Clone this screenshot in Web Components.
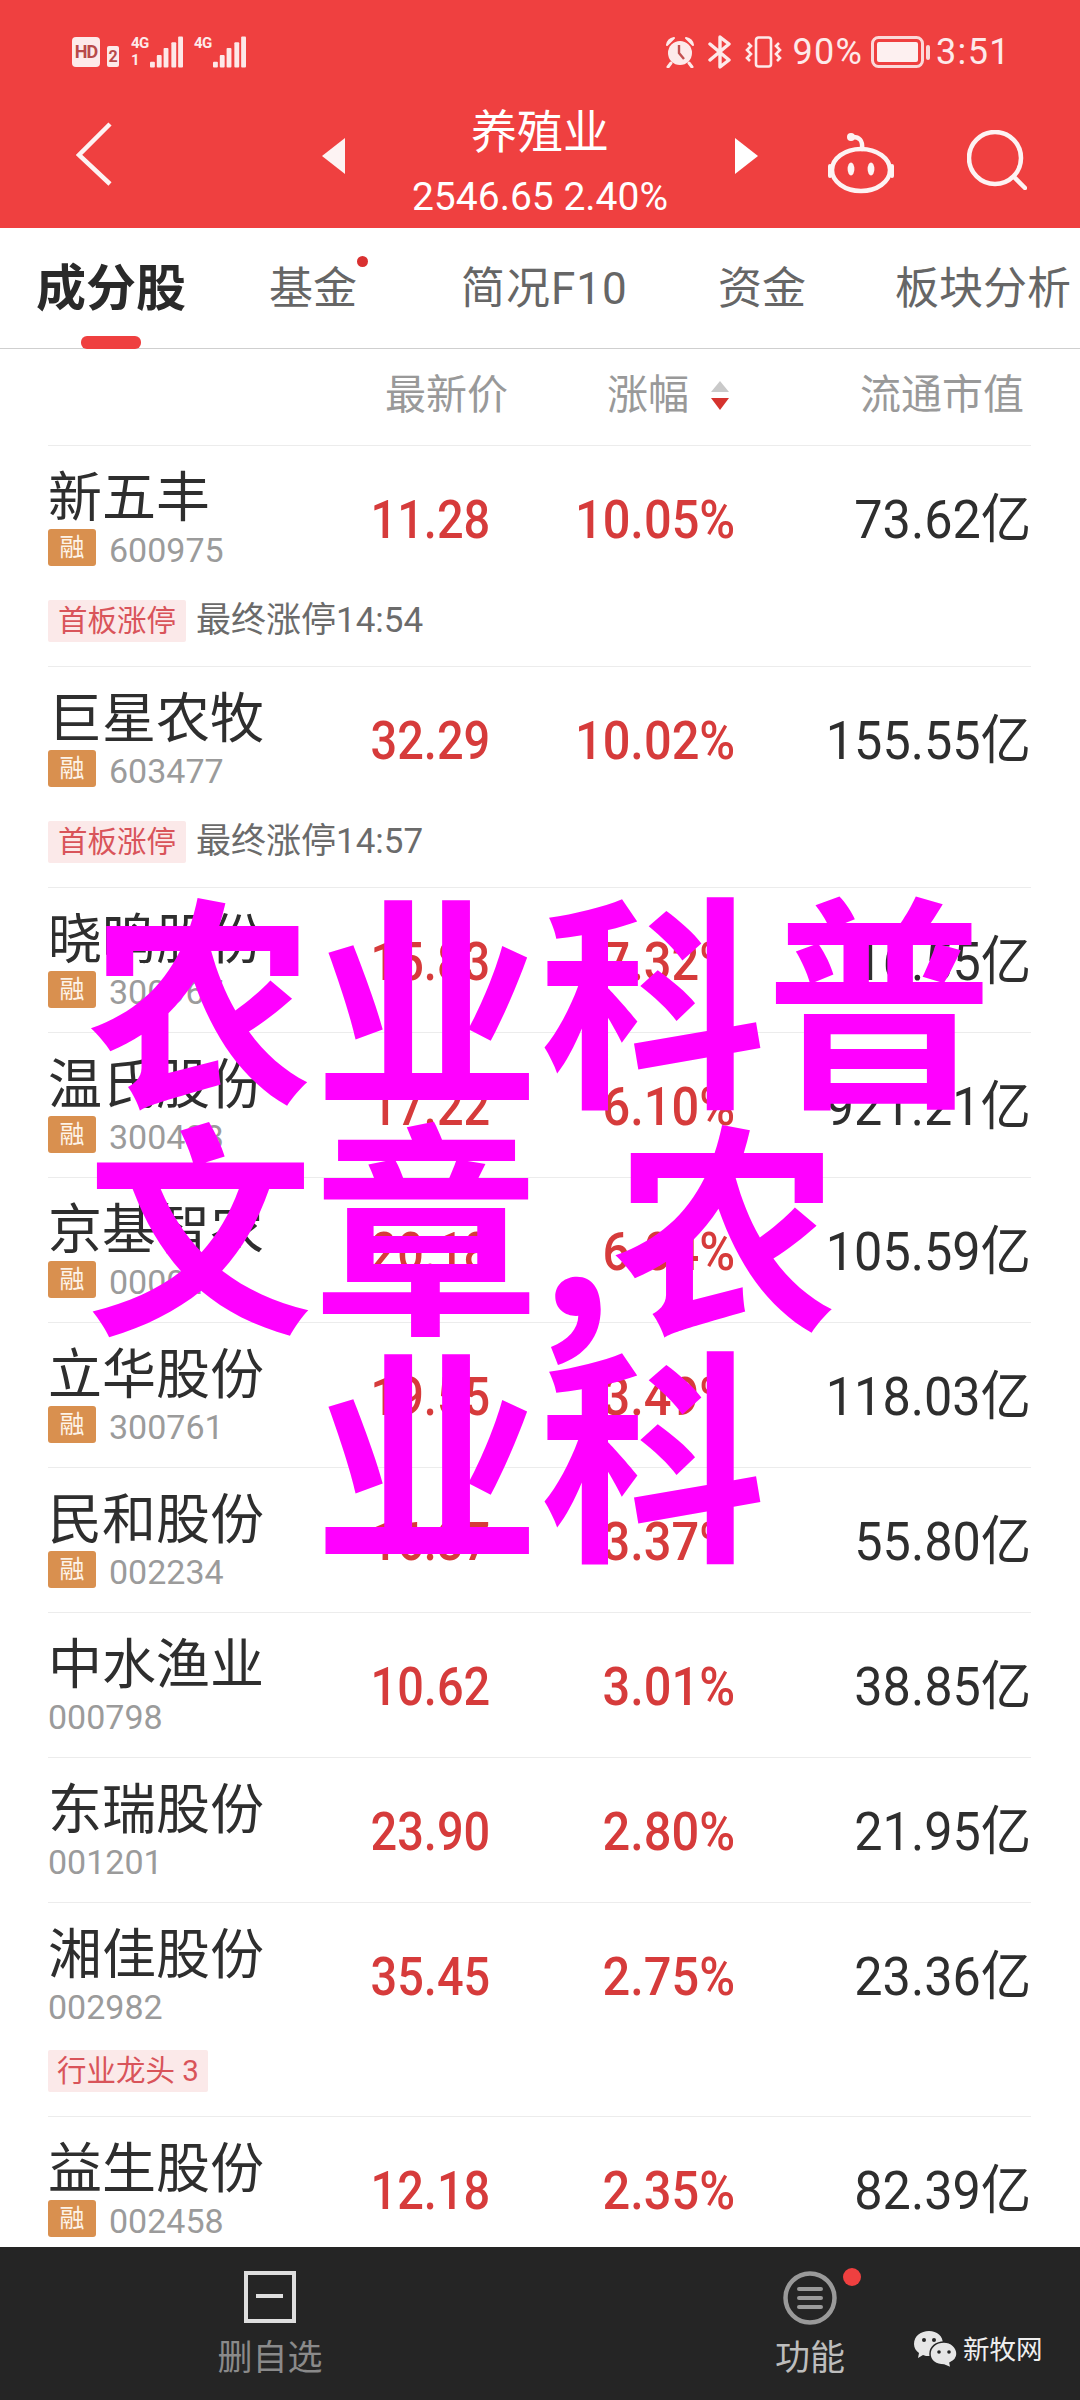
<!DOCTYPE html>
<html lang="zh">
<head>
<meta charset="utf-8">
<title>养殖业</title>
<style>
  html, body { margin: 0; padding: 0; }
  body {
    position: relative;
    width: 1080px;
    height: 2400px;
    overflow: hidden;
    background: #fff;
    font-family: Roboto, "Noto Sans CJK SC", sans-serif;
    display: flex;
    flex-direction: column;
  }
  stock-list { flex: 1; min-height: 0; }
</style>
</head>
<body>
<app-header></app-header>
<tab-bar></tab-bar>
<list-header></list-header>
<stock-list>
  <stock-row name="新五丰" code="600975" price="11.28" pct="10.05%" cap="73.62亿" margin tag="首板涨停" note="最终涨停14:54"></stock-row>
  <stock-row name="巨星农牧" code="603477" price="32.29" pct="10.02%" cap="155.55亿" margin tag="首板涨停" note="最终涨停14:57"></stock-row>
  <stock-row name="晓鸣股份" code="300967" price="15.83" pct="7.32%" cap="16.55亿" margin></stock-row>
  <stock-row name="温氏股份" code="300498" price="17.22" pct="6.10%" cap="921.21亿" margin></stock-row>
  <stock-row name="京基智农" code="000048" price="20.18" pct="6.04%" cap="105.59亿" margin></stock-row>
  <stock-row name="立华股份" code="300761" price="19.55" pct="3.49%" cap="118.03亿" margin></stock-row>
  <stock-row name="民和股份" code="002234" price="16.37" pct="3.37%" cap="55.80亿" margin></stock-row>
  <stock-row name="中水渔业" code="000798" price="10.62" pct="3.01%" cap="38.85亿"></stock-row>
  <stock-row name="东瑞股份" code="001201" price="23.90" pct="2.80%" cap="21.95亿"></stock-row>
  <stock-row name="湘佳股份" code="002982" price="35.45" pct="2.75%" cap="23.36亿" tag="行业龙头 3" tight></stock-row>
  <stock-row name="益生股份" code="002458" price="12.18" pct="2.35%" cap="82.39亿" margin></stock-row>
</stock-list>
<bottom-bar></bottom-bar>
<watermark-text></watermark-text>

<script>
const FONT = 'Roboto, "Noto Sans CJK SC", sans-serif';

class AppHeader extends HTMLElement {
  constructor() {
    super();
    this.attachShadow({ mode: 'open' });
  }

  connectedCallback() {
    const bars = `
      <svg class="bars" width="33" height="32" viewBox="0 0 34 32" fill="#fde8e8">
        <rect x="0" y="26" width="5" height="6" rx="1"/>
        <rect x="7" y="19" width="5" height="13" rx="1"/>
        <rect x="14" y="12" width="5" height="20" rx="1"/>
        <rect x="22" y="6" width="5" height="26" rx="1"/>
        <rect x="29" y="0" width="5" height="32" rx="1"/>
      </svg>`;
    this.shadowRoot.innerHTML = `
      <style>
        :host {
          display: block;
          height: 228px;
          background: #ef4040;
          color: #fff;
          font-family: ${FONT};
        }
        .status {
          display: flex;
          justify-content: space-between;
          align-items: center;
          height: 32px;
          padding: 36px 69px 0 72px;
          color: #fdeaea;
        }
        .side { display: flex; align-items: center; }
        .hd {
          width: 28px;
          height: 30px;
          border-radius: 4px;
          background: #fdeaea;
          color: #b84a4a;
          font: 700 18px/30px Roboto, sans-serif;
          text-align: center;
          letter-spacing: -1px;
        }
        .sim {
          width: 12px;
          height: 21px;
          margin: 9px 0 0 7px;
          border-radius: 2px;
          background: #fdeaea;
          color: #b84a4a;
          font: 700 16px/21px Roboto, sans-serif;
          text-align: center;
        }
        .net {
          display: flex;
          flex-direction: column;
          justify-content: space-between;
          height: 32px;
          margin-left: 12px;
          font: 700 15px/15px Roboto, sans-serif;
          letter-spacing: -.5px;
        }
        .net.two { margin-left: 11px; }
        .net span { width: 19px; }
        .num { font-size: 36px; line-height: 32px; font-weight: 400; }
        .pct { margin-left: 11px; letter-spacing: 1.2px; }
        .time { margin-left: 6px; letter-spacing: 1.4px; }
        .alarm { margin-right: 13px; }
        .bt { margin-right: 13px; }
        .battery { margin-left: 8px; }
        .nav {
          display: grid;
          grid-template-columns: 1fr 436px 1fr;
          height: 160px;
        }
        .back { padding: 54px 0 0 76px; }
        .middle {
          display: flex;
          justify-content: space-between;
          align-items: flex-start;
        }
        .arrow { margin-top: 70px; }
        .titles { text-align: center; padding-top: 32px; }
        .title { font-size: 46px; line-height: 64px; font-weight: 400; }
        .sub { font-size: 39px; line-height: 46px; margin-top: 10px; white-space: nowrap; }
        .actions { display: flex; gap: 73px; padding: 62px 0 0 70px; align-items: flex-start; }
      </style>
      <div class="status">
        <div class="side">
          <span class="hd">HD</span>
          <span class="sim">2</span>
          <span class="net"><span>4G</span><span>1</span></span>
          ${bars}
          <span class="net two"><span>4G</span><span></span></span>
          ${bars}
        </div>
        <div class="side">
          <svg class="alarm" width="30" height="32" viewBox="0 0 30 32">
            <circle cx="15" cy="17" r="12" fill="#fdeaea"/>
            <path d="M2 9 Q3 3 9 2 Z M28 9 Q27 3 21 2 Z" fill="#fdeaea" stroke="#fdeaea" stroke-width="2" stroke-linejoin="round"/>
            <path d="M6 27 L3 31 M24 27 L27 31" stroke="#fdeaea" stroke-width="3" stroke-linecap="round"/>
            <path d="M14 9 V17 L19 23" fill="none" stroke="#c25050" stroke-width="2.4"/>
          </svg>
          <svg class="bt" width="24" height="34" viewBox="0 0 24 34">
            <path d="M2 9 L21 25 L12 32 V2 L21 9 L2 25" fill="none" stroke="#fdeaea" stroke-width="3.4" stroke-linejoin="round" stroke-linecap="round"/>
          </svg>
          <svg width="37" height="32" viewBox="0 0 37 32" fill="none" stroke="#fdeaea" stroke-width="2.6">
            <rect x="11" y="1.5" width="15" height="29" rx="2.5"/>
            <path d="M3 7 L6 10 L2 14 L6 18 L2 22 L5 25"/>
            <path d="M34 7 L31 10 L35 14 L31 18 L35 22 L32 25"/>
          </svg>
          <span class="num pct">90%</span>
          <svg class="battery" width="59" height="32" viewBox="0 0 59 32">
            <rect x="1.5" y="1.5" width="50" height="29" rx="6" fill="none" stroke="#fbd9d9" stroke-width="3"/>
            <rect x="6" y="6" width="41" height="20" rx="2" fill="#fdf0f0"/>
            <rect x="55" y="9" width="4" height="15" rx="2" fill="#fbd9d9"/>
          </svg>
          <span class="num time">3:51</span>
        </div>
      </div>
      <div class="nav">
        <div class="back">
          <svg width="36" height="64" viewBox="0 0 36 64" fill="none" stroke="#fdf3f3" stroke-width="4.5">
            <path d="M34 2 L3 33 L34 62"/>
          </svg>
        </div>
        <div class="middle">
          <svg class="arrow" width="23" height="36" viewBox="0 0 23 36" fill="#fdf3f3"><path d="M23 0 V36 L0 18 Z"/></svg>
          <div class="titles">
            <div class="title">养殖业</div>
            <div class="sub">2546.65 2.40%</div>
          </div>
          <svg class="arrow" width="23" height="36" viewBox="0 0 23 36" fill="#fff"><path d="M0 0 V36 L23 18 Z"/></svg>
        </div>
        <div class="actions">
          <svg width="66" height="64" viewBox="0 0 66 64" fill="none" stroke="#fdf3f3" stroke-width="4.5">
            <ellipse cx="33" cy="40" rx="29" ry="21"/>
            <path d="M34 19 C35 10 31 7 25 7" stroke-linecap="round"/>
            <circle cx="23" cy="7" r="4" fill="#fdf3f3" stroke="none"/>
            <ellipse cx="23" cy="39" rx="3.4" ry="6.5" fill="#fdf3f3" stroke="none"/>
            <ellipse cx="43" cy="39" rx="3.4" ry="6.5" fill="#fdf3f3" stroke="none"/>
            <path d="M2 36 V46 M64 36 V46" stroke-width="4" stroke-linecap="round"/>
          </svg>
          <svg width="60" height="60" viewBox="0 0 60 60" fill="none" stroke="#fdf3f3" stroke-width="4.5">
            <circle cx="28" cy="28" r="26"/>
            <path d="M47 47 L58 58" stroke-linecap="round"/>
          </svg>
        </div>
      </div>
    `;
  }
}

class TabBar extends HTMLElement {
  constructor() {
    super();
    this.attachShadow({ mode: 'open' });
  }

  connectedCallback() {
    this.shadowRoot.innerHTML = `
      <style>
        :host {
          display: grid;
          grid-template-columns: 233px 192px 257px 177px 177px;
          box-sizing: border-box;
          height: 121px;
          padding-left: 36px;
          background: #fff;
          border-bottom: 1px solid #cfcfcf;
          font-family: ${FONT};
          white-space: nowrap;
        }
        .tab {
          position: relative;
          padding-top: 3px;
          font-size: 44px;
          line-height: 117px;
          color: #666;
        }
        .wide { letter-spacing: 1px; }
        .active {
          font-size: 50px;
          font-weight: 700;
          color: #2a2a2a;
        }
        .active::after {
          content: "";
          position: absolute;
          left: 45px;
          top: 108px;
          width: 60px;
          height: 13px;
          border-radius: 6px;
          background: #ef4040;
        }
        .dot::after {
          content: "";
          position: absolute;
          left: 88px;
          top: 28px;
          width: 11px;
          height: 11px;
          border-radius: 50%;
          background: #d93030;
        }
      </style>
      <div class="tab active">成分股</div>
      <div class="tab dot">基金</div>
      <div class="tab wide">简况F10</div>
      <div class="tab">资金</div>
      <div class="tab">板块分析</div>
    `;
  }
}

class ListHeader extends HTMLElement {
  constructor() {
    super();
    this.attachShadow({ mode: 'open' });
  }

  connectedCallback() {
    this.shadowRoot.innerHTML = `
      <style>
        :host {
          display: block;
          box-sizing: border-box;
          height: 97px;
          margin: 0 49px 0 48px;
          border-bottom: 1px solid #ececec;
          font-family: ${FONT};
          font-size: 41px;
          color: #999;
        }
        .cols {
          display: grid;
          grid-template-columns: 460px 221px 302px;
          padding-top: 18px;
          line-height: 56px;
          text-align: right;
        }
        .sort { display: flex; justify-content: flex-end; align-items: center; gap: 22px; }
        .cap { padding-right: 7px; }
      </style>
      <div class="cols">
        <span>最新价</span>
        <span class="sort">
          <span>涨幅</span>
          <svg width="18" height="29" viewBox="0 0 18 29">
            <path d="M9 0 L18 11 H0 Z" fill="#c9c9c9"/>
            <path d="M0 17 H18 L9 29 Z" fill="#d5332e"/>
          </svg>
        </span>
        <span class="cap">流通市值</span>
      </div>
    `;
  }
}

class StockList extends HTMLElement {
  constructor() {
    super();
    this.attachShadow({ mode: 'open' });
    this.shadowRoot.innerHTML = `
      <style>
        :host { display: block; overflow: hidden; background: #fff; }
      </style>
      <slot></slot>
    `;
  }
}

class StockRow extends HTMLElement {
  constructor() {
    super();
    this.attachShadow({ mode: 'open' });
  }

  connectedCallback() {
    const attr = (n) => this.getAttribute(n) || '';
    const tag = attr('tag');
    const note = attr('note');
    const tight = this.hasAttribute('tight');
    this.shadowRoot.innerHTML = `
      <style>
        :host {
          display: block;
          box-sizing: border-box;
          margin: 0 49px 0 48px;
          padding: 23px 0 24px;
          border-bottom: 1px solid #ececec;
          font-family: ${FONT};
        }
        .main {
          display: grid;
          grid-template-columns: 280px 162px 245px 296px;
          align-items: center;
        }
        .name { font-size: 54px; line-height: 60px; color: #2e2e2e; white-space: nowrap; }
        .code-line { display: flex; align-items: center; gap: 13px; height: 37px; }
        .badge {
          width: 48px;
          height: 37px;
          border-radius: 3px;
          background: #d9904f;
          color: #fdf3e8;
          font-size: 25px;
          line-height: 37px;
          text-align: center;
        }
        .code { padding-top: 6px; font-size: 34px; line-height: 33px; color: #9b9b9b; }
        .val {
          display: block;
          justify-self: end;
          margin-top: 4px;
          font-size: 53px;
          font-weight: 500;
          line-height: 60px;
          white-space: nowrap;
          transform: scaleX(.92);
          transform-origin: right center;
        }
        .price { transform: scaleX(.885); }
        .up { color: #d63b3b; }
        .cap { color: #2e2e2e; font-weight: 400; transform: scaleX(.95); }
        .extra { display: flex; align-items: center; gap: 10px; margin-top: ${tight ? 27 : 34}px; }
        .tag {
          box-sizing: border-box;
          height: 42px;
          padding: 0 ${tight ? 9 : 10}px;
          background: #fbe9e9;
          color: #d9545a;
          font-size: 29.5px;
          line-height: 42px;
          border-radius: 2px;
        }
        .note { font-size: 35px; line-height: 42px; color: #6b6b6b; white-space: nowrap; }
      </style>
      <div class="main">
        <div>
          <div class="name">${attr('name')}</div>
          <div class="code-line">
            ${this.hasAttribute('margin') ? '<span class="badge">融</span>' : ''}
            <span class="code">${attr('code')}</span>
          </div>
        </div>
        <span class="val up price">${attr('price')}</span>
        <span class="val up">${attr('pct')}</span>
        <span class="val cap">${attr('cap')}</span>
      </div>
      ${tag ? `<div class="extra"><span class="tag">${tag}</span>${note ? `<span class="note">${note}</span>` : ''}</div>` : ''}
    `;
  }
}

class BottomBar extends HTMLElement {
  constructor() {
    super();
    this.attachShadow({ mode: 'open' });
  }

  connectedCallback() {
    this.shadowRoot.innerHTML = `
      <style>
        :host {
          display: grid;
          grid-template-columns: 540px 540px;
          position: relative;
          box-sizing: border-box;
          height: 153px;
          padding-top: 24px;
          background: #252525;
          font-family: ${FONT};
        }
        .item {
          position: relative;
          display: flex;
          flex-direction: column;
          align-items: center;
        }
        .icon { height: 54px; display: block; }
        .label { margin-top: 9px; font-size: 35px; line-height: 50px; }
        .del { color: #8a8a8a; }
        .fn { color: #bdbdbd; }
        .dot {
          position: absolute;
          left: 303px;
          top: -3px;
          width: 18px;
          height: 18px;
          border-radius: 50%;
          background: #ef4040;
        }
        .mark {
          position: absolute;
          left: 914px;
          top: 84px;
          display: flex;
          align-items: center;
          gap: 6px;
          color: #eee;
          font-size: 26.5px;
          line-height: 36px;
        }
      </style>
      <div class="item">
        <svg class="icon" width="52" height="54" viewBox="0 0 52 54" fill="none" stroke="#dedede" stroke-width="4">
          <rect x="2" y="2" width="48" height="48"/>
          <path d="M12 25 H39"/>
        </svg>
        <span class="label del">删自选</span>
      </div>
      <div class="item">
        <svg class="icon" width="54" height="54" viewBox="0 0 54 54" fill="none" stroke="#9a9a9a">
          <circle cx="27" cy="27" r="24.5" stroke-width="4.5"/>
          <path d="M16 18 H38 M16 27 H38 M16 36 H38" stroke-width="4" stroke-linecap="round"/>
        </svg>
        <span class="label fn">功能</span>
        <span class="dot"></span>
      </div>
      <div class="mark">
        <svg width="43" height="37" viewBox="0 0 43 37">
          <path d="M15 0 C7 0 0 5 0 13 C0 17 2 20 5 22 L4 27 L9 24 C11 25 13 25 15 25 C23 25 29 20 29 13 C29 5 23 0 15 0 Z" fill="#e6e6e6"/>
          <path d="M30 11 C22 11 16 16 16 23 C16 30 22 34 30 34 L37 37 L36 32 C40 30 43 27 43 23 C43 16 37 11 30 11 Z" fill="#e6e6e6" stroke="#252525" stroke-width="1.5"/>
          <circle cx="10" cy="9" r="2" fill="#252525"/>
          <circle cx="20" cy="9" r="2" fill="#252525"/>
          <circle cx="25" cy="21" r="1.8" fill="#252525"/>
          <circle cx="35" cy="21" r="1.8" fill="#252525"/>
        </svg>
        <span>新牧网</span>
      </div>
    `;
  }
}

class WatermarkText extends HTMLElement {
  constructor() {
    super();
    this.attachShadow({ mode: 'open' });
  }

  connectedCallback() {
    this.shadowRoot.innerHTML = `
      <style>
        :host {
          position: absolute;
          left: 0;
          top: 878px;
          width: 1080px;
          color: #ff00ff;
          font: 700 226px/227px "Noto Sans CJK SC", sans-serif;
          text-align: center;
          white-space: nowrap;
          pointer-events: none;
        }
        .line { display: block; }
        .second { text-align: left; padding-left: 87px; }
      </style>
      <span class="line">农业科普</span>
      <span class="line second">文章,农</span>
      <span class="line">业科</span>
    `;
  }
}

customElements.define('app-header', AppHeader);
customElements.define('tab-bar', TabBar);
customElements.define('list-header', ListHeader);
customElements.define('stock-list', StockList);
customElements.define('stock-row', StockRow);
customElements.define('bottom-bar', BottomBar);
customElements.define('watermark-text', WatermarkText);
</script>
</body>
</html>
